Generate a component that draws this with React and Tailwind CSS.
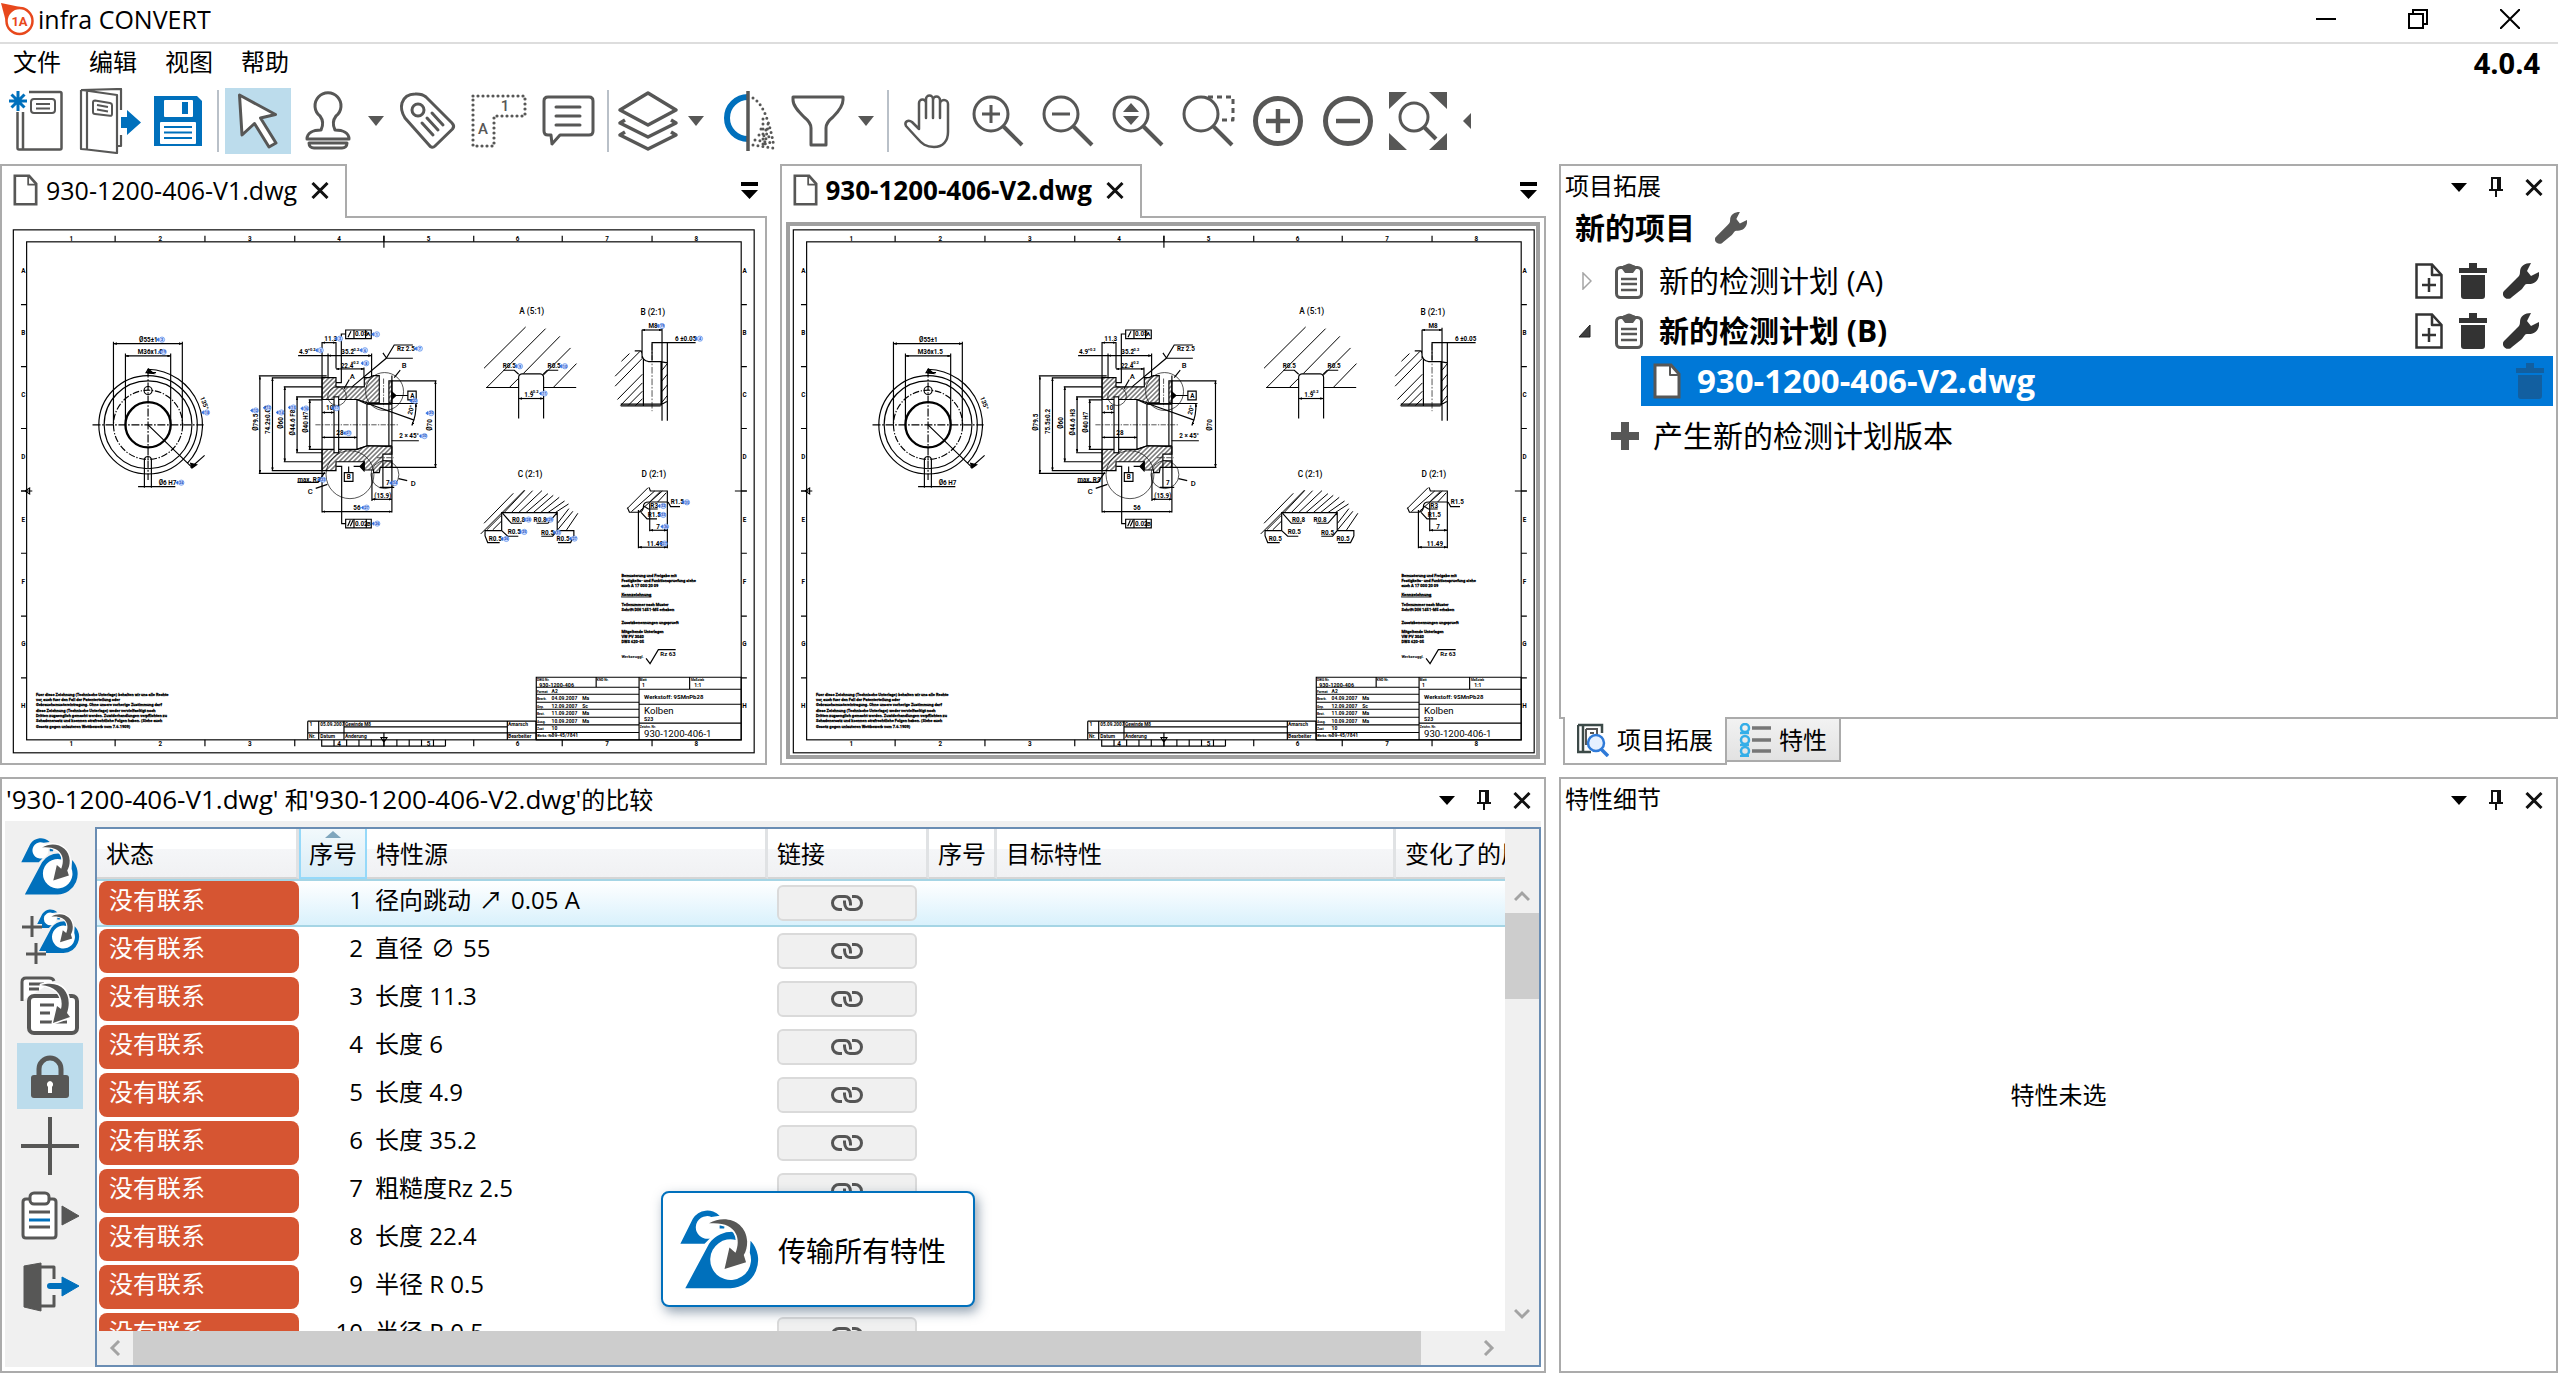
import React from 'react';

const GREY = '#575756';
const BLUE = '#0070bc';

/* ---------- icons ---------- */

const Icon = ({ children, className = 'size-[66px]', box = '0 0 66 66' }) => (
  <svg
    viewBox={box}
    className={className}
    fill="none"
    stroke={GREY}
    strokeWidth="3"
    strokeLinejoin="round"
    aria-hidden="true"
  >
    {children}
  </svg>
);

const NewIcon = () => (
  <Icon>
    <path d="M13 3v20M4 13h18M6.500 6.500l13 13M19.500 6.500l-13 13" stroke={BLUE} />
    <path d="M24 4h31q1.500 0 1.500 1.500V60q0 1.500-1.500 1.500H14q-1.500 0-1.500-1.500V24M18 24v37" strokeWidth="2.500" />
    <rect x="26" y="11" width="24" height="14" rx="3" strokeWidth="2" />
    <path d="M31 16h14M31 20.500h14" strokeWidth="2" />
  </Icon>
);

const OpenIcon = () => (
  <Icon>
    <path d="M6 2l40-1v21M46 47v11h-3M6 2v59l6 .500V3.500M7 2l35 5v58L12 61.500" strokeWidth="2.200" />
    <path d="M20 12.500l15 2.500q2 .500 2 2v9q0 2-2 1.800L20 26q-2 0-2-2v-9.500q0-2 2-2zM22 17l11 2M22 21.500l11 2" strokeWidth="2" />
    <path d="M46 29h6v-7l14 12.500L52 47v-7h-6z" fill={BLUE} stroke="none" />
  </Icon>
);

const SaveIcon = () => (
  <Icon>
    <g stroke="none">
      <path d="M9 8h43l5 5v45H9z" fill={BLUE} />
      <rect x="19" y="12" width="29" height="17" rx="1" fill="#fff" />
      <rect x="37" y="14" width="6" height="12" fill={BLUE} />
      <rect x="15" y="34" width="36" height="22" rx="1" fill="#fff" />
    </g>
    <path d="M19 39h28M19 44.500h28M19 50h28" stroke={BLUE} strokeWidth="2" />
  </Icon>
);

const CursorIcon = () => (
  <Icon>
    <path d="M14.500 7l36 19.500-15 3.500L51 55l-7 4-14.500-23.500L17 47z" fill="#fff" strokeWidth="3" />
  </Icon>
);

const StampIcon = () => (
  <Icon>
    <path d="M26 42c3-6 2-10-1-14a13 13 0 1 1 16 0c-3 4-4 8-1 14 8 0 14 3 14 9H12c0-6 6-9 14-9z" />
    <path d="M14 55h38c0 3-2 5-5 5H19c-3 0-5-2-5-5z" />
  </Icon>
);

const TagIcon = () => (
  <Icon>
    <path d="M31 9l26 26q3 3 .500 6L40 58q-3 3-6-1L10 30q-5-8-3-15 3-9 13-9 7-.500 11 3z" />
    <circle cx="23" cy="22" r="6" />
    <path d="M27 35l11 12M32 30l11 12M37 25l11 12" strokeLinecap="round" />
  </Icon>
);

const AreaIcon = () => (
  <Icon>
    <path d="M8 8h52v20H29v30H8z" strokeDasharray="0 5" strokeLinecap="round" strokeWidth="3.200" />
    <g fill={GREY} stroke="none" fontFamily="Roboto" fontWeight="500" textAnchor="middle">
      <text x="18" y="46" fontSize="15">A</text>
      <text x="40" y="23" fontSize="15">1</text>
    </g>
  </Icon>
);

const CommentIcon = () => (
  <Icon>
    <path d="M13 9h41q4 0 4 4v30q0 4-4 4H25l-8 9-1-9h-3q-4 0-4-4V13q0-4 4-4z" />
    <path d="M21 19h24M21 28h24M21 37h24" strokeLinecap="round" />
  </Icon>
);

const LayersIcon = () => (
  <Icon>
    <path d="M33 5l28 17-28 15L5 22zM10 32l-5 3 28 14 28-14-5-3M10 44l-5 3 28 14 28-14-5-3" strokeWidth="3.500" />
  </Icon>
);

const MirrorIcon = () => (
  <Icon>
    <path d="M33 9a21 21 0 0 0 0 42" stroke={BLUE} strokeWidth="6" />
    <path d="M33 3v60" strokeWidth="3.500" />
    <g strokeLinecap="round" strokeWidth="3" strokeDasharray="0 5">
      <path d="M38 10q14 8 21 49M48 31v28M53 36l-3 22" />
      <path d="M38 57l20 3M40 52l17 3M44 47l12 2M46 41l9 2" />
    </g>
  </Icon>
);

const FunnelIcon = () => (
  <Icon>
    <path d="M8 9h50v3c0 6-5 12-10 17-5 4-7 7-7 11v17H26V40c0-4-2-7-7-11C14 24 8 18 8 12z" />
  </Icon>
);

const HandIcon = () => (
  <Icon>
    <path
      d="M24 41V15a3.500 3.500 0 0 1 7 0v15M31 15v-4a3.500 3.500 0 0 1 7 0v19M38 12a3.500 3.500 0 0 1 7 0v18M45 16a3.800 3.800 0 0 1 8 0v28c0 9-5 15-14 15-8 0-12-3-17-9L11 38c-2-4 2-7 6-4l7 7"
      strokeWidth="2.500"
      strokeLinecap="round"
    />
  </Icon>
);

const Lens = () => (
  <>
    <circle cx="26" cy="26" r="17" />
    <path d="M38 38l19 19" strokeWidth="4" />
  </>
);

const ZoomInIcon = () => (
  <Icon><Lens /><path d="M17 26h18M26 17v18" /></Icon>
);
const ZoomOutIcon = () => (
  <Icon><Lens /><path d="M17 26h18" /></Icon>
);
const ZoomDragIcon = () => (
  <Icon><Lens /><path d="M26 15l8 9H18zM26 37l8-9H18z" fill={GREY} stroke="none" /></Icon>
);
const ZoomAreaIcon = () => (
  <Icon><Lens /><path d="M33 9h25v23H44" strokeDasharray="5 4" /></Icon>
);
const PlusCircleIcon = () => (
  <Icon>
    <circle cx="33" cy="33" r="22.500" strokeWidth="5" />
    <path d="M21 33h24M33 21v24" strokeWidth="4.500" />
  </Icon>
);
const MinusCircleIcon = () => (
  <Icon>
    <circle cx="33" cy="33" r="22.500" strokeWidth="5" />
    <path d="M21 33h24" strokeWidth="4.500" />
  </Icon>
);
const FitIcon = () => (
  <Icon>
    <path d="M4 4h18L4 21zM62 4H44l18 17zM4 62h18L4 45zM62 62H44l18-17z" fill={GREY} stroke="none" />
    <circle cx="29" cy="29" r="14" />
    <path d="M39 39l12 12" strokeWidth="4" />
  </Icon>
);

const TransferShape = () => (
  <g stroke="none">
    <circle cx="863" cy="1281" r="56" fill="#fff" />
    <circle cx="797" cy="1195" r="32" fill="#fff" />
    <path d="M743 1356L806 1238A75 75 0 0 1 875 1207L877 1228A54 54 0 1 0 914 1262L916 1230A75 75 0 0 1 863 1356Z" fill={BLUE} />
    <path d="M730 1238L763 1172A45 45 0 0 1 834 1164L812 1167A30 30 0 1 0 808 1224L794 1238Z" fill={BLUE} />
    <path d="M834 1186h14l-2 12h-12z" fill={BLUE} />
    <path
      d="M806 1184C850 1158 905 1180 907 1232C907 1247 904 1258 898 1268L904 1287L847 1305L860 1248L876 1262C892 1225 880 1178 806 1184Z"
      fill={GREY}
      stroke="#fff"
      strokeWidth="10"
      paintOrder="stroke"
    />
  </g>
);

const TransferIcon = ({ className }) => (
  <Icon className={className} box="729 1146 212 212"><TransferShape /></Icon>
);

const TransferNewIcon = () => (
  <Icon>
    <svg x="18" y="4" width="45" height="48" viewBox="729 1146 212 212"><TransferShape /></svg>
    <path d="M5 24h20M15 13v21M9 51h20M19 40v21" stroke="#f0f0f0" strokeWidth="6" />
    <path d="M5 24h20M15 13v21M9 51h20M19 40v21" />
  </Icon>
);

const TransferTextIcon = () => (
  <Icon>
    <path d="M5 28V9q0-4 4-4h23q4 0 5 3" fill="#fff" />
    <path d="M12 11h15M12 16h10" />
    <rect x="12" y="23" width="48" height="37" rx="5" fill="#fff" strokeWidth="4" />
    <path d="M23 32h14M23 40h10M23 49h27" />
    <path d="M24 12C46 6 56 22 50 40L53 44 36 50 40 33 44 36C47 24 40 13 24 12z" fill={GREY} stroke="#fff" paintOrder="stroke" />
  </Icon>
);

const LockIcon = () => (
  <Icon>
    <rect x="14" y="32" width="38" height="23" rx="3" fill={GREY} stroke="none" />
    <path d="M22 33v-7a11 11 0 0 1 22 0v7" strokeWidth="5" />
    <path d="M33 38a3.500 3.500 0 0 1 2 6v6h-4v-6a3.500 3.500 0 0 1 2-6z" fill="#fff" stroke="none" />
  </Icon>
);

const CrossIcon = () => (
  <Icon><path d="M4 33h58M33 4v58" strokeWidth="4" /></Icon>
);

const ReportIcon = () => (
  <Icon>
    <path d="M13 16H9q-3 0-3 3v33q0 3 3 3h27q3 0 3-3V19q0-3-3-3h-4" fill="#fff" />
    <rect x="13" y="10" width="19" height="11" rx="4" fill="#fff" />
    <path d="M12 29h21M12 44h21" />
    <path d="M12 37h21" stroke={BLUE} />
    <path d="M45 23l17 10-17 9z" fill={GREY} stroke={GREY} strokeWidth="1" />
  </Icon>
);

const ExitIcon = () => (
  <Icon>
    <path d="M7 13l17-3v48L7 54z" fill={GREY} strokeWidth="1" />
    <path d="M24 14h13v12M24 53h13V42" />
    <path d="M33 33h14" stroke={BLUE} strokeWidth="6" strokeLinecap="round" />
    <path d="M45 24l17 9-17 10z" fill={BLUE} stroke={BLUE} strokeWidth="1" />
  </Icon>
);

const FileIcon = ({ className, fill = 'none' }) => (
  <Icon className={className} box="0 0 28 36">
    <path d="M2 2h16l8 9v23H2z" fill={fill} strokeLinejoin="miter" />
    <path d="M17 2v10h9" strokeWidth="2" />
  </Icon>
);

const AddFileIcon = () => (
  <Icon className="h-9 w-7" box="0 0 28 36">
    <g stroke="#333" strokeWidth="2.500">
      <path d="M1.500 1.500H17L26.500 12v22.500h-25z" strokeLinejoin="miter" />
      <path d="M17 2v10h9M7 22h14M14 15v14" />
    </g>
  </Icon>
);

const TrashIcon = ({ fill = '#333' }) => (
  <Icon className="h-9 w-7" box="0 0 28 36">
    <path d="M10 0h8v5h10v5H0V5h10zM2 12h24v21q0 3-3 3H5q-3 0-3-3z" fill={fill} stroke="none" />
  </Icon>
);

const WrenchIcon = ({ className, fill = '#333' }) => (
  <Icon className={className} box="0 0 36 36">
    <path d="M28 0l-4 8 4 5 8-4c1 7-4 13-12 12-2 0-3 2-5 5L9 34c-3 4-10 1-9-4 0-1 1-2 2-3l12-12c2-2 3-3 3-6 0-6 5-9 11-9z" fill={fill} stroke="none" />
  </Icon>
);

const ClipboardIcon = () => (
  <Icon className="h-9 w-7" box="0 0 28 36">
    <rect x="1.500" y="4.500" width="25" height="30" rx="4" />
    <path d="M10 2q4-3 8 0 3 0 3 4l-3 4h-8L7 6q0-4 3-4z" fill={GREY} stroke="none" />
    <path d="M6 16h16M6 21h16M6 27h16" strokeWidth="2.500" />
  </Icon>
);

const CaretIcon = () => (
  <svg viewBox="0 0 16 10" className="h-[10px] w-4" aria-hidden="true">
    <path d="M0 0h16L8 10z" fill={GREY} />
  </svg>
);

const MenuCaret = () => (
  <svg viewBox="0 0 16 9" className="h-[9px] w-4" aria-hidden="true"><path d="M0 0h16L8 9z" /></svg>
);

const PinIcon = () => (
  <svg viewBox="0 0 14 20" className="h-5 w-[14px]" fill="none" stroke="#111" strokeWidth="2" aria-hidden="true">
    <path d="M3 12V1h8v11M0 13h14M7 13v7" />
    <path d="M9.500 1v11" strokeWidth="3" />
  </svg>
);

const CloseIcon = () => (
  <svg viewBox="0 0 18 17" className="h-[17px] w-[18px]" stroke="#111" strokeWidth="3" aria-hidden="true">
    <path d="M1.500 1l15 15M16.500 1l-15 15" />
  </svg>
);

const LinkIcon = () => (
  <svg viewBox="0 0 32 16" className="h-4 w-8" fill="none" stroke="#555" strokeWidth="3" aria-hidden="true">
    <path d="M11 14.500H8a6.500 6.500 0 0 1 0-13h6q5 0 5.500 7v2" />
    <path d="M21 1.500h3a6.500 6.500 0 0 1 0 13h-5q-5 0-5.500-7v-2" />
  </svg>
);

const Chevron = ({ d }) => (
  <svg viewBox="0 0 16 16" className="size-4" fill="none" stroke="#a3a3a3" strokeWidth="3" aria-hidden="true">
    <path d={d} />
  </svg>
);

/* ---------- drawing sheet ---------- */

const columnTicks = [343, 613, 883, 1151, 1421, 1687, 1957];
const columnLabels = [211, 479, 748, 1016, 1285, 1553, 1822, 2090];
const rowTicks = [913, 1099, 1285, 1473, 1660, 1849, 2035];
const rowLabels = [811, 999, 1185, 1372, 1560, 1747, 1934, 2120];

const legalNote = [
  'Fuer diese Zeichnung (Technische Unterlage) behalten wir uns alle Rechte',
  'vor, auch fuer den Fall der Patenterteilung oder',
  'Gebrauchsmustereintragung. Ohne unsere vorherige Zustimmung darf',
  'diese Zeichnung (Technische Unterlage) weder vervielfaeltigt noch',
  'Dritten zugaenglich gemacht werden. Zuwiderhandlungen verpflichten zu',
  'Schadenersatz und koennen strafrechtliche Folgen haben. (Siehe auch',
  'Gesetz gegen unlauteren Wettbewerb vom 7.6.1909)',
];

const sideNotes = [
  [52, 'Bemusterung und Freigabe mit'],
  [68, 'Festigkeits- und Funktionspruefung siehe'],
  [83, 'auch A 17 000 20 09'],
  [140, 'Teilenummer nach Muster'],
  [155, 'Schrift DIN 1451-M5 erhaben'],
  [192, 'Zusatzbenennungen ungeprueft'],
  [221, 'Mitgeltende Unterlagen'],
  [236, 'VW PV 3040'],
  [251, 'DWS 620-05'],
];

const titleRows = [
  [400, 'Format', 'A2'],
  [420, 'Bearb.', '04.09.2007    Ma'],
  [444, 'Gep.', '12.09.2007    Sc'],
  [466, 'Best.', '11.09.2007    Ma'],
  [490, 'Ausg.', '10.09.2007    Ma'],
  [512, 'Zust', '10'],
  [533, 'Werkz.-Nr.', '89-45/7841'],
];

// x, y, text, rotation
const sectionDims = [
  [282, 152, '11.3'],
  [206, 192, '4.9'],
  [333, 192, '35.2'],
  [331, 232, '22.4'],
  [374, 138, '0.05'],
  [500, 181, 'Rz 2.5'],
  [287, 359, '10'],
  [318, 435, '28'],
  [507, 445, '2 × 45°'],
  [467, 585, '7'],
  [432, 623, '(15.9)'],
  [369, 660, '56'],
  [201, 576, 'max. R3'],
  [374, 708, '0.02'],
  [545, 375, '20°', -75],
  [84, 422, 'Ø79.5', -90],
  [158, 416, 'Ø60', -90],
  [233, 428, 'Ø40 H7', -90],
  [607, 422, 'Ø70', -90],
];

const frontMarks = [[483, 1018, 2], [488, 1055, 19], [618, 1237, 18], [541, 1448, 24]];
const sectionMarks = [
  [439, 132, 1], [328, 145, 3], [270, 180, 5], [403, 180, 6], [407, 219, 8], [568, 175, 7],
  [553, 332, 22], [318, 354, 17], [354, 429, 21], [602, 369, 20], [582, 438, 30], [493, 579, 34],
  [408, 653, 27], [440, 701, 26], [277, 569, 23], [75, 361, 12], [113, 353, 13], [152, 367, 14],
  [188, 352, 15], [226, 355, 16],
];
const detailMarks = [
  [209, 228, 9], [344, 228, 10], [283, 310, 11], [636, 107, 19], [750, 145, 4], [235, 689, 28],
  [301, 689, 29], [222, 726, 25], [324, 728, 31], [168, 747, 26], [373, 746, 27], [640, 648, 32],
  [711, 637, 35], [640, 675, 33], [648, 710, 36], [644, 761, 37],
];

const Marks = ({ items }) =>
  items.map(([x, y, n]) => (
    <g key={`${x}-${y}`} stroke="#2d6be0">
      <path d={`M${x - 9} ${y - 5}l-6 5 6 5z`} fill="#2d6be0" strokeWidth="2" />
      <circle cx={x + 1} cy={y} r="8" fill="#cfe0ff" strokeWidth="1.500" />
      <text x={x + 1} y={y + 4} fontSize="11" fontWeight="700" textAnchor="middle" fill="#1d4fc0" stroke="none">{n}</text>
    </g>
  ));

const Label = ({ x, y, size = 19, rotate, children, ...rest }) => (
  <text
    x={x}
    y={y}
    fontSize={size}
    fill="#000"
    stroke="none"
    transform={rotate ? `rotate(${rotate} ${x} ${y})` : undefined}
    {...rest}
  >
    {children}
  </text>
);

const DrawingSheet = ({ id, marks, diameter, bore }) => (
  <svg
    viewBox="27 678 2244 1587"
    className="block h-full w-full"
    fill="none"
    stroke="#000"
    strokeWidth="3.500"
    fontFamily="Roboto, 'Liberation Sans', sans-serif"
    fontWeight="700"
    role="img"
    aria-label={id}
  >
    <defs>
      <pattern id={`hatch-${id}`} width="10" height="10" patternUnits="userSpaceOnUse" patternTransform="rotate(45)">
        <path d="M5 0v10" strokeWidth="2.500" />
      </pattern>
      <marker id={`arrow-${id}`} viewBox="0 0 10 8" refX="10" refY="4" markerWidth="10" markerHeight="8" markerUnits="userSpaceOnUse" orient="auto-start-reverse">
        <path d="M0 0l10 4-10 4z" fill="#000" stroke="none" />
      </marker>
    </defs>

    {/* sheet frame with zone marks */}
    <rect x="37" y="688" width="2227" height="1572" />
    <rect x="77" y="724" width="2148" height="1497" />
    {columnTicks.map((x) => (
      <path key={x} d={`M${x} 706v18M${x} 2221v19`} />
    ))}
    {rowTicks.map((y) => (
      <path key={y} d={`M60 ${y}h17M2225 ${y}h17`} />
    ))}
    {columnLabels.map((x, i) => (
      <React.Fragment key={x}>
        <Label x={x} y="722" size="19" textAnchor="middle">{i + 1}</Label>
        <Label x={x} y="2239" size="19" textAnchor="middle">{i + 1}</Label>
      </React.Fragment>
    ))}
    {rowLabels.map((y, i) => (
      <React.Fragment key={y}>
        <Label x="67" y={y + 6} size="19" textAnchor="middle">{'ABCDEFGH'[i]}</Label>
        <Label x="2235" y={y + 6} size="19" textAnchor="middle">{'ABCDEFGH'[i]}</Label>
      </React.Fragment>
    ))}
    <path d="M1151 706v36M1151 2200v40M1142 2214h18l-9 14zM60 1473h34M72 1473l14-9v18zM2206 1473h36" />

    {/* front view */}
    <circle cx="442" cy="1274" r="148" />
    <circle cx="442" cy="1274" r="132" />
    <circle cx="442" cy="1274" r="104" strokeDasharray="20 5 4 5" />
    <circle cx="442" cy="1274" r="68" strokeWidth="7" />
    <circle cx="442" cy="1171" r="12" />
    <path d="M431 1463v-86a11 11 0 0 1 21 0v86M412 1460h112" />
    <path d="M275 1274h334M442 1108v332" strokeDasharray="24 5 5 5" />
    <path d="M442 1274L574 1402M560 1390a168 168 0 0 0 -118 -283l-6 10h30M570 1403l42-37" />
    <path d="M574 1404l-4-14 18 4zM443 1106l16 14-18-2z" fill="#000" />
    <g markerStart={`url(#arrow-${id})`} markerEnd={`url(#arrow-${id})`}>
      <path d="M338 1030h207" />
      <path d="M374 1067h136" />
    </g>
    <path d="M338 1024v250M545 1024v250M374 1060v214M510 1060v214" />
    <Label x="415" y="1025">Ø55±1</Label>
    <Label x="411" y="1062">M36x1.5</Label>
    <Label x="474" y="1455">Ø6 H7</Label>
    <Label x="598" y="1192" rotate="70">135°</Label>
    {marks && <Marks items={frontMarks} />}

    {/* longitudinal section */}
    <g transform="translate(690 870)">
      <path
        d="M275 262h42v28h85v-28h15l12-6h18v82h-35l-32-10H275zM476 272h9v66h-9zM275 478h105l32-11 73 3v22h-27v20h27v20h-35l-3 16h-17v-8h-28v-25h-85v27h-42z"
        fill={`url(#hatch-${id})`}
      />
      <rect x="311" y="320" width="14" height="168" fill="#fff" />
      <path d="M275 155v513M380 328v150M410 342v125M476 342v128M485 256v412M380 328l30 14h75M380 478l30-11h75" />
      <path d="M255 404h248M460 265v85M440 503h50" strokeDasharray="16 4 4 4" strokeWidth="2" />
      <circle cx="320" cy="318" r="28" strokeWidth="2" />
      <circle cx="463" cy="304" r="57" strokeWidth="2" />
      <circle cx="359" cy="554" r="72" strokeWidth="2" />
      <circle cx="464" cy="554" r="42" strokeWidth="2" />
      <g markerStart={`url(#arrow-${id})`} markerEnd={`url(#arrow-${id})`}>
        <path d="M275 157h42" />
        <path d="M293 196h131" />
        <path d="M317 236h84" />
        <path d="M88 258v292" />
        <path d="M126 263v279" />
        <path d="M163 290v225" />
        <path d="M200 320v167" />
        <path d="M238 329v149" />
        <path d="M616 272v260" />
        <path d="M275 367h36" />
        <path d="M275 442h105" />
        <path d="M425 628h60" />
        <path d="M275 665h210" />
        <path d="M557 340q2 34-12 66" />
      </g>
      <path d="M203 196h90M293 190v72M317 155v80M424 190v68M401 232v30M85 257h204M85 550h200M124 263h151M124 542h151M160 290h115M160 515h115M197 320h78M197 488h78M235 329h40M235 478h40M485 272h134M485 532h134M425 548v85M458 515v75M448 592h44" />
      <path d="M410 340h152M412 340l140 50M484 452h82M201 577h62l20-30" />
      <path d="M365 290l103-86 24-40h56M458 188l11 16h79M510 240l-18 22M357 268l-16 28M505 566l26 6M256 595l35-12M497 316h36M370 529h24M317 277h16V131h13M318 529h16v172h12" />
      <path d="M346 119h77v26h-77zM371 119v26M406 119v26M346 688h77v26h-77zM371 688v26M408 688v26M533 303h25v26h-25zM342 548h26v26h-26zM355 548v-19" />
      <path d="M485 305l12 11-12 11zM401 516l-12 13 12 13z" fill="#000" />
      <path d="M353 141l9-18M352 709l8-18M360 709l8-18" />
      {sectionDims.map(([x, y, text, rotate]) => (
        <Label key={text} x={x} y={y} rotate={rotate}>{text}</Label>
      ))}
      <Label x="119" y="432" rotate="-90">{diameter}</Label>
      <Label x="194" y="436" rotate="-90">{bore}</Label>
      <Label x="232" y="181" size="12">+0.2</Label>
      <Label x="363" y="181" size="12">+0.2</Label>
      <Label x="362" y="220" size="12">+0.2</Label>
      <Label x="408" y="138" size="18">A</Label>
      <Label x="410" y="708" size="18">B</Label>
      <Label x="540" y="323">A</Label>
      <Label x="349" y="568">B</Label>
      <g fontWeight="500">
        <Label x="358" y="265" size="23">A</Label>
        <Label x="515" y="234" size="23">B</Label>
        <Label x="232" y="611" size="23">C</Label>
        <Label x="542" y="587" size="23">D</Label>
      </g>
      {marks && <Marks items={sectionMarks} />}
    </g>

    {/* details A to D */}
    <g transform="translate(1350 870)">
      <g fontWeight="500">
        <Label x="208" y="70" size="25">A (5:1)</Label>
        <Label x="572" y="74" size="25">B (2:1)</Label>
        <Label x="203" y="561" size="25">C (2:1)</Label>
        <Label x="575" y="561" size="25">D (2:1)</Label>
      </g>

      <path d="M102 234L227 110M110 292L287 115M178 292l28-28M220 250L330 138M280 255l82-82M310 292l70-72" strokeWidth="3" />
      <path d="M108 292h98M281 292h98M206 385V262q0-10 10-11h55q10 1 10 11v123M160 240h33l13 12M325 240h-33l-12 12" />
      <path d="M206 325h75" markerStart={`url(#arrow-${id})`} markerEnd={`url(#arrow-${id})`} />
      <Label x="158" y="234">R0.5</Label>
      <Label x="293" y="234">R0.5</Label>
      <Label x="223" y="321">1.9</Label>
      <Label x="242" y="308" size="12">+0.2</Label>

      <path d="M515 213l24-23M496 258l75-75M496 288l82-84M503 328l75-76M512 346l66-68M535 346l43-43M557 346l21-20M637 240l16-20M637 272l16-20M637 304l16-20M637 336l16-20" strokeWidth="3" />
      <path d="M555 182h16q6 0 6 14l4 10q6 8 16 8h36l20 4M577 118v86M581 206v140M637 112v280M653 155v237M634 212v134M513 342h124l14-8M513 347h120" />
      <path d="M607 160v203" strokeDasharray="20 5 5 5" strokeWidth="2" />
      <path d="M577 119h60" markerStart={`url(#arrow-${id})`} markerEnd={`url(#arrow-${id})`} />
      <path d="M607 210v-53h46h85" />
      <Label x="596" y="114">M8</Label>
      <Label x="676" y="152">6 ±0.05</Label>

      <path d="M102 700l88-90M92 732l132-132M110 720l44-44M128 720l27-27M162 668l62-66M184 668l64-66M206 668l70-66M228 668l66-57M250 668l60-52M272 668l56-46M294 668l50-35M316 668l40-26M323 700l34-44M323 720l46-56M350 720l34-50" strokeWidth="3" />
      <path d="M155 722V668h167v54M155 722h-50v16M322 722h50v16M158 670l26 30h32M320 670l-26 30h-34M155 722l18 17h32M322 722l-14 17h-34M105 738l8 20h36M372 738l-10 20h-38" />
      <Label x="186" y="695">R0.8</Label>
      <Label x="251" y="695">R0.8</Label>
      <Label x="173" y="732">R0.5</Label>
      <Label x="273" y="734">R0.5</Label>
      <Label x="116" y="753">R0.5</Label>
      <Label x="320" y="753">R0.5</Label>

      <path d="M533 655l62-62M545 665l70-62M568 665l70-62M600 636l32-32M624 636l26-28" strokeWidth="3" />
      <path d="M598 592l4 11h51v33h-56q-16 0-16 14t-14 17h-28l-6-14M653 603v172M566 660v115M600 640v84M655 636l8 14h28M582 648l14 9h28M574 667l18 20h30" />
      <g markerStart={`url(#arrow-${id})`} markerEnd={`url(#arrow-${id})`}>
        <path d="M600 721h53" />
        <path d="M566 772h87" />
      </g>
      <Label x="663" y="643">R1.5</Label>
      <Label x="602" y="653">R3</Label>
      <Label x="594" y="682">R1.5</Label>
      <Label x="620" y="716">7</Label>
      <Label x="591" y="767">11.49</Label>
      {marks && <Marks items={detailMarks} />}
    </g>

    {/* notes and title block */}
    {legalNote.map((line, i) => (
      <Label key={line} x="105" y={2088 + i * 16} size="12" stroke="#000" strokeWidth="0.8">{line}</Label>
    ))}
    <g transform="translate(1200 1680)">
      {sideNotes.map(([y, line]) => (
        <Label key={line} x="665" y={y} size="12" stroke="#000" strokeWidth="0.8">{line}</Label>
      ))}
      <Label x="665" y="108" size="13" stroke="#000" strokeWidth="0.8" textDecoration="underline">Kennzeichnung</Label>
      <Label x="665" y="296" size="12">Werkzeuggl.</Label>
      <path d="M739 296l12 16 25-42h52" />
      <Label x="782" y="290" size="18">Rz 63</Label>

      <path d="M409 353h616v188H409zM718 353v188M409 383h309M409 404h309M409 428h309M409 449h309M409 473h309M409 496h309M409 519h309M718 389h307M718 434h307M718 491h307M589 353v30M870 353v36" />
      <Label x="418" y="381" size="16">930-1200-406</Label>
      {titleRows.map(([y, name, value]) => (
        <React.Fragment key={name}>
          <Label x="411" y={y} size="10">{name}</Label>
          <Label x="455" y={y} size="15" xmlSpace="preserve">{value}</Label>
        </React.Fragment>
      ))}
      <Label x="411" y="365" size="10">DWG Nr.</Label>
      <Label x="591" y="365" size="10">KND Nr.</Label>
      <Label x="720" y="365" size="10">Blatt</Label>
      <Label x="874" y="365" size="10">Maßstab</Label>
      <Label x="720" y="505" size="10">Zeichn. Nr.</Label>
      <Label x="727" y="382" size="15">1</Label>
      <Label x="884" y="382" size="15">1:1</Label>
      <Label x="733" y="417" size="18">Werkstoff: 9SMnPb28</Label>
      <Label x="733" y="463" size="29" fontWeight="400">Kolben</Label>
      <Label x="733" y="485" size="16">S23</Label>
      <Label x="733" y="533" size="29" fontWeight="400">930-1200-406-1</Label>
    </g>
    <path d="M922 2165h686v56M922 2165v56M955 2165v56M1031 2165v56M1522 2165v56M1031 2182h491M922 2200h686M964 2221v19h372M1001 2221v19M1039 2221v19M1076 2221v19M1113 2221v19M1190 2221v19M1227 2221v19M1264 2221v19M1300 2221v19M1336 2221v19" />
    <Label x="927" y="2180" size="15">1</Label>
    <Label x="960" y="2180" size="14">05.09.2007</Label>
    <Label x="1034" y="2180" size="14">Gewinde M8</Label>
    <Label x="1524" y="2180" size="15">Amarsch</Label>
    <Label x="926" y="2217" size="15">Nr.</Label>
    <Label x="960" y="2217" size="15">Datum</Label>
    <Label x="1034" y="2217" size="15">Änderung</Label>
    <Label x="1524" y="2217" size="15">Bearbeiter</Label>
  </svg>
);

/* ---------- window parts ---------- */

const ToolButton = ({ label, active, children }) => (
  <button type="button" aria-label={label} className={`size-[66px] ${active ? 'bg-[#bcdcec]' : ''}`}>
    {children}
  </button>
);

const ToolMenuButton = ({ label, children }) => (
  <div className="flex">
    <ToolButton label={label}>{children}</ToolButton>
    <button type="button" aria-label={`${label}菜单`} className="flex w-[30px] items-center justify-center">
      <CaretIcon />
    </button>
  </div>
);

const Separator = () => <div className="-mx-0.5 h-[62px] w-[10px] self-center px-1"><div className="h-full w-0.5 bg-[#b9c0c8]" /></div>;

const TitleBar = () => (
  <header className="flex h-11 shrink-0 items-center justify-between border-b-2 border-[#ddd] pb-1">
    <div className="flex items-center gap-[3px]">
      <svg viewBox="0 0 34 34" className="ml-px size-[34px]" aria-hidden="true">
        <path d="M0 1l24 5L5 20z" fill="#e8481c" />
        <circle cx="18.500" cy="19" r="13" fill="#fff" stroke="#e8481c" strokeWidth="2.500" />
        <text x="18.500" y="24" fontSize="13" fontWeight="700" fontFamily="Roboto" textAnchor="middle" fill="#e8481c">1A</text>
      </svg>
      <h1 className="text-[25px]">infra CONVERT</h1>
    </div>
    <div className="mr-[38px] flex items-center gap-[72px]">
      <button type="button" aria-label="最小化" className="flex size-5 items-center">
        <span className="h-0.5 w-full bg-black" />
      </button>
      <button type="button" aria-label="还原">
        <svg viewBox="0 0 20 20" className="size-5" fill="none" stroke="#000" strokeWidth="2" aria-hidden="true">
          <path d="M1 5h14v14H1zM5 5V1h14v14h-4" />
        </svg>
      </button>
      <button type="button" aria-label="关闭">
        <svg viewBox="0 0 20 20" className="size-5" stroke="#000" strokeWidth="2" aria-hidden="true">
          <path d="M0 0l20 20M20 0L0 20" />
        </svg>
      </button>
    </div>
  </header>
);

const MenuBar = () => (
  <nav className="flex h-9 shrink-0 items-center justify-between pr-[18px] pl-[13px]">
    <div className="flex gap-7">
      {['文件', '编辑', '视图', '帮助'].map((name) => (
        <button key={name} type="button" className="text-[24px] leading-9">{name}</button>
      ))}
    </div>
    <span className="text-[29px] font-bold">4.0.4</span>
  </nav>
);

const Toolbar = () => (
  <div className="mt-2 mb-[10px] flex shrink-0 gap-1 pl-[5px]">
    <ToolButton label="新建"><NewIcon /></ToolButton>
    <ToolButton label="打开"><OpenIcon /></ToolButton>
    <ToolButton label="保存"><SaveIcon /></ToolButton>
    <Separator />
    <ToolButton label="选择" active><CursorIcon /></ToolButton>
    <ToolMenuButton label="印章"><StampIcon /></ToolMenuButton>
    <ToolButton label="标签"><TagIcon /></ToolButton>
    <ToolButton label="区域"><AreaIcon /></ToolButton>
    <ToolButton label="注释"><CommentIcon /></ToolButton>
    <Separator />
    <ToolMenuButton label="图层"><LayersIcon /></ToolMenuButton>
    <ToolButton label="镜像"><MirrorIcon /></ToolButton>
    <ToolMenuButton label="过滤"><FunnelIcon /></ToolMenuButton>
    <Separator />
    <ToolButton label="平移"><HandIcon /></ToolButton>
    <ToolButton label="放大"><ZoomInIcon /></ToolButton>
    <ToolButton label="缩小"><ZoomOutIcon /></ToolButton>
    <ToolButton label="动态缩放"><ZoomDragIcon /></ToolButton>
    <ToolButton label="区域缩放"><ZoomAreaIcon /></ToolButton>
    <ToolButton label="增大"><PlusCircleIcon /></ToolButton>
    <ToolButton label="减小"><MinusCircleIcon /></ToolButton>
    <ToolButton label="适合窗口"><FitIcon /></ToolButton>
    <button type="button" aria-label="收起" className="px-2">
      <svg viewBox="0 0 8 16" className="h-4 w-2" aria-hidden="true"><path d="M8 0v16L0 8z" fill={GREY} /></svg>
    </button>
  </div>
);

const DocumentPane = ({ name, active, children }) => (
  <section className="flex min-w-0 flex-1 flex-col">
    <div className="flex h-[52px] shrink-0">
      <div className="relative z-10 -mb-0.5 flex items-center border-2 border-b-0 border-[#ababab] bg-white pr-4 pb-1 pl-[11px]">
        <FileIcon className="mr-2 h-8 w-[25px]" />
        <span className={active ? 'text-[26px] font-bold' : 'text-[25px]'}>{name}</span>
        <button type="button" aria-label={`关闭 ${name}`} className="ml-[14px]"><CloseIcon /></button>
      </div>
      <button type="button" aria-label="文档列表" className="mr-[9px] ml-auto">
        <svg viewBox="0 0 17 17" className="size-[17px]" aria-hidden="true"><path d="M0 0h17v4H0zM0 8h17l-8.500 9z" /></svg>
      </button>
    </div>
    <div className="min-h-0 flex-1 border-2 border-[#ababab] p-1">
      <div className={`h-full border-4 ${active ? 'border-[#a0a0a0]' : 'border-white'}`}>{children}</div>
    </div>
  </section>
);

const PanelHeader = ({ title, children }) => (
  <div className="flex h-[42px] shrink-0 items-center justify-between pr-[13px] pl-1">
    <h2 className="pb-0.5 text-[24px] whitespace-nowrap">{children || title}</h2>
    <div className="flex items-center gap-[22px]">
      <button type="button" aria-label={`${title}菜单`}><MenuCaret /></button>
      <button type="button" aria-label={`固定${title}`}><PinIcon /></button>
      <button type="button" aria-label={`关闭${title}`}><CloseIcon /></button>
    </div>
  </div>
);

const PlanRow = ({ name, open }) => (
  <div className="flex h-[50px] items-center pr-[14px] pl-[17px]">
    <button type="button" aria-label={`展开 ${name}`} className="mr-[23px] w-[14px]">
      <svg viewBox="0 0 14 18" className="h-[18px] w-[14px]" aria-hidden="true">
        {open ? (
          <path d="M12 3v12H1z" fill="#404040" stroke="#222" />
        ) : (
          <path d="M5 1v16l8-8z" fill="#fff" stroke="#a5a5a5" strokeWidth="1.500" />
        )}
      </svg>
    </button>
    <ClipboardIcon />
    <span className={`ml-4 text-[30px] whitespace-nowrap ${open ? 'font-bold' : ''}`}>{name}</span>
    <div className="ml-auto flex gap-4">
      <button type="button" aria-label="添加文件"><AddFileIcon /></button>
      <button type="button" aria-label="删除"><TrashIcon /></button>
      <button type="button" aria-label="设置"><WrenchIcon className="size-9" /></button>
    </div>
  </div>
);

const ProjectPanel = () => (
  <section className="flex min-h-0 flex-col">
    <div className="min-h-0 flex-1 border-2 border-[#ababab] pr-[3px]">
      <div className="-mr-[3px]"><PanelHeader title="项目拓展" /></div>
      <div className="-mt-0.5 flex h-11 items-center gap-5 pl-[14px]">
        <span className="text-[30px] font-bold">新的项目</span>
        <button type="button" aria-label="项目设置"><WrenchIcon className="size-8" fill={GREY} /></button>
      </div>
      <div className="mt-1.5">
        <PlanRow name="新的检测计划 (A)" />
        <PlanRow name="新的检测计划 (B)" open />
        <div className="ml-20 flex h-[50px] items-center bg-[#0078d7] pr-[9px] pl-3">
          <FileIcon className="h-9 w-7" fill="#fff" />
          <span className="ml-4 pb-0.5 text-[33px] font-bold text-white">930-1200-406-V2.dwg</span>
          <button type="button" aria-label="删除" className="ml-auto"><TrashIcon fill="#125fa0" /></button>
        </div>
        <button type="button" className="mt-[5px] flex h-[50px] items-center gap-[14px] pl-[50px] text-[30px]">
          <svg viewBox="0 0 28 28" className="size-7" aria-hidden="true">
            <path d="M10 0h8v10h10v8H18v10h-8V18H0v-8h10z" fill={GREY} />
          </svg>
          产生新的检测计划版本
        </button>
      </div>
    </div>
    <div className="flex h-[46px] shrink-0 items-start pl-1">
      <button type="button" className="relative z-10 -mt-0.5 flex h-12 items-center gap-2 border-2 border-t-0 border-[#ababab] bg-white px-3 text-[24px]">
        <svg viewBox="0 0 32 34" className="h-[34px] w-8" fill="none" strokeWidth="2" aria-hidden="true">
          <path d="M1 2h24v8M1 2v27h13M6 2v27" stroke="#3c4a48" strokeWidth="2.500" />
          <path d="M9 6h11v7M9 6v15h4M13 10h4" stroke="#555" />
          <circle cx="19" cy="20" r="8" fill="#e5f0ff" stroke="#2f7ad8" strokeWidth="2.500" />
          <path d="M24 26l7 7" stroke="#2f7ad8" strokeWidth="3.500" />
        </svg>
        项目拓展
      </button>
      <button type="button" className="-ml-0.5 flex h-[43px] items-center gap-2 border-r-2 border-b-2 border-l-2 border-[#ababab] bg-gradient-to-b from-[#f2f2f2] to-[#e2e2e2] px-3 text-[24px]">
        <svg viewBox="0 0 32 34" className="h-[34px] w-8" fill="none" stroke="#35aee8" strokeWidth="2.500" aria-hidden="true">
          <circle cx="6" cy="5" r="4" /><circle cx="6" cy="17" r="4" /><circle cx="6" cy="28" r="4" />
          <path d="M1 10h9M1 22h9M1 33h9" />
          <path d="M13 5h19M13 17h19M13 28h19" stroke="#777" strokeWidth="3.500" />
        </svg>
        特性
      </button>
    </div>
  </section>
);

// name, symbol, value
const rows = [
  ['径向跳动', '↗', '0.05 A'],
  ['直径', '∅', '55'],
  ['长度 11.3'],
  ['长度 6'],
  ['长度 4.9'],
  ['长度 35.2'],
  ['粗糙度Rz 2.5'],
  ['长度 22.4'],
  ['半径 R 0.5'],
  ['半径 R 0.5'],
];

const headers = [
  { name: '状态' },
  { name: '序号', sorted: true },
  { name: '特性源' },
  { name: '链接' },
  { name: '序号' },
  { name: '目标特性' },
  { name: '变化了的属性' },
];

const ComparisonTable = () => (
  <table className="w-[1503px] table-fixed border-separate border-spacing-0 text-[24px]">
    <colgroup>
      <col className="w-[202px]" />
      <col className="w-[68px]" />
      <col className="w-[401px]" />
      <col className="w-[161px]" />
      <col className="w-[68px]" />
      <col className="w-[399px]" />
      <col className="w-[204px]" />
    </colgroup>
    <thead>
      <tr>
        {headers.map(({ name, sorted }, i) => (
          <th
            key={i}
            className={`relative h-[50px] overflow-hidden pt-0.5 pb-0 text-left font-normal whitespace-nowrap ${
              sorted
                ? 'border-x-2 border-b-2 border-[#96d9f9] bg-gradient-to-b from-[#f2f9fc] to-[#d8ecf6] pl-2'
                : 'border-r-3 border-b-2 border-r-[#e0e2e4] border-b-[#d5d5d5] bg-[linear-gradient(#fff_42%,#f5f6f8_42%,#f0f1f3)] pl-[9px]'
            }`}
          >
            {sorted && (
              <svg viewBox="0 0 16 7" className="absolute top-0.5 left-6 h-[7px] w-4" aria-hidden="true">
                <path d="M0 7l8-7 8 7z" fill="#7fa6bd" />
              </svg>
            )}
            {name}
          </th>
        ))}
      </tr>
    </thead>
    <tbody>
      {rows.map(([text, symbol, value], i) => {
        const cell = `h-12 border-y-2 align-top leading-[38px] ${
          i === 0 ? 'border-[#a5d5e5] bg-gradient-to-b from-white to-[#d9f1fc]' : 'border-transparent'
        }`;
        return (
          <tr key={i} className="h-12">
            <td className={`${cell} p-0`}>
              <div className="ml-0.5 h-11 rounded-lg bg-[#d65532] pl-[10px] text-white">没有联系</div>
            </td>
            <td className={`${cell} py-0 pr-1 pl-0 text-right`}>{i + 1}</td>
            <td className={`${cell} py-0 pr-0 pl-2 whitespace-nowrap`}>
              {text}
              {symbol && <span className="mx-2">{symbol}</span>}
              {value}
            </td>
            <td className={`${cell} p-0`}>
              <button type="button" aria-label={`链接 ${i + 1}`} className="mt-1 ml-[9px] flex h-9 w-[140px] items-center justify-center rounded-md border-2 border-[#dadada] bg-[#f0f0f0]">
                <LinkIcon />
              </button>
            </td>
            <td className={`${cell} p-0`} />
            <td className={`${cell} p-0`} />
            <td className={`${cell} p-0`} />
          </tr>
        );
      })}
    </tbody>
  </table>
);

const ComparisonPanel = () => (
  <section className="flex min-h-0 min-w-0 flex-col border-2 border-[#ababab]">
    <PanelHeader title="比较">
      <span className="text-[26px]">'930-1200-406-V1.dwg'</span> 和<span className="text-[26px]">'930-1200-406-V2.dwg'</span>的比较
    </PanelHeader>
    <div className="relative mr-[3px] mb-1 ml-[3px] flex min-h-0 flex-1 bg-[#f0f0f0] pt-1.5">
      <div className="flex w-[90px] shrink-0 flex-col items-center gap-1 pt-1.5">
        <ToolButton label="传输所有特性"><TransferIcon className="m-auto size-[58px]" /></ToolButton>
        <ToolButton label="传输新特性"><TransferNewIcon /></ToolButton>
        <ToolButton label="传输文本"><TransferTextIcon /></ToolButton>
        <ToolButton label="锁定" active><LockIcon /></ToolButton>
        <ToolButton label="十字线"><CrossIcon /></ToolButton>
        <ToolButton label="报告"><ReportIcon /></ToolButton>
        <ToolButton label="退出"><ExitIcon /></ToolButton>
      </div>
      <div className="flex min-w-0 flex-1 flex-col border-2 border-[#6a8db3]">
        <div className="flex min-h-0 flex-1">
          <div className="min-w-0 flex-1 overflow-hidden bg-white">
            <ComparisonTable />
          </div>
          <div className="flex w-[34px] shrink-0 flex-col items-center pt-[50px]">
            <div className="flex h-[34px] items-center"><Chevron d="M1 12l7-7 7 7" /></div>
            <div className="h-[86px] w-full bg-[#cdcdcd]" />
            <div className="mt-auto flex h-[34px] items-center"><Chevron d="M1 4l7 7 7-7" /></div>
          </div>
        </div>
        <div className="flex h-[34px] shrink-0 items-center pr-[34px]">
          <div className="flex w-9 justify-center"><Chevron d="M12 1L5 8l7 7" /></div>
          <div className="h-full flex-1 bg-[#cdcdcd]" />
          <div className="flex w-[84px] justify-end pr-2"><Chevron d="M4 1l7 7-7 7" /></div>
        </div>
      </div>
      <div role="tooltip" className="absolute bottom-[60px] left-[656px] flex h-[116px] items-center rounded-lg border-2 border-[#0070bc] bg-white pr-[27px] pl-[17px] shadow-[3px_5px_12px_rgba(40,70,100,0.5)]">
        <TransferIcon className="mr-[18px] size-20" />
        <span className="pt-1 text-[28px]">传输所有特性</span>
      </div>
    </div>
  </section>
);

const DetailPanel = () => (
  <section className="flex min-h-0 flex-col border-2 border-[#ababab]">
    <PanelHeader title="特性细节" />
    <p className="m-auto pb-0.5 text-[24px]">特性未选</p>
  </section>
);

const App = () => (
  <div className="flex h-screen flex-col overflow-hidden bg-white font-['Open_Sans','Noto_Sans_CJK_SC',sans-serif] leading-none text-black">
    <TitleBar />
    <MenuBar />
    <Toolbar />
    <main className="grid min-h-0 flex-1 grid-cols-[1546fr_999fr] grid-rows-[601fr_596fr] gap-x-[13px] gap-y-3 pb-0.5">
      <div className="flex min-h-0 min-w-0 gap-[13px]">
        <DocumentPane name="930-1200-406-V1.dwg">
          <DrawingSheet id="V1" marks diameter="74.2±0.05" bore="Ø44.6 F8" />
        </DocumentPane>
        <DocumentPane name="930-1200-406-V2.dwg" active>
          <DrawingSheet id="V2" diameter="75.5±0.2" bore="Ø44.6 H3" />
        </DocumentPane>
      </div>
      <ProjectPanel />
      <ComparisonPanel />
      <DetailPanel />
    </main>
  </div>
);

export default App;
